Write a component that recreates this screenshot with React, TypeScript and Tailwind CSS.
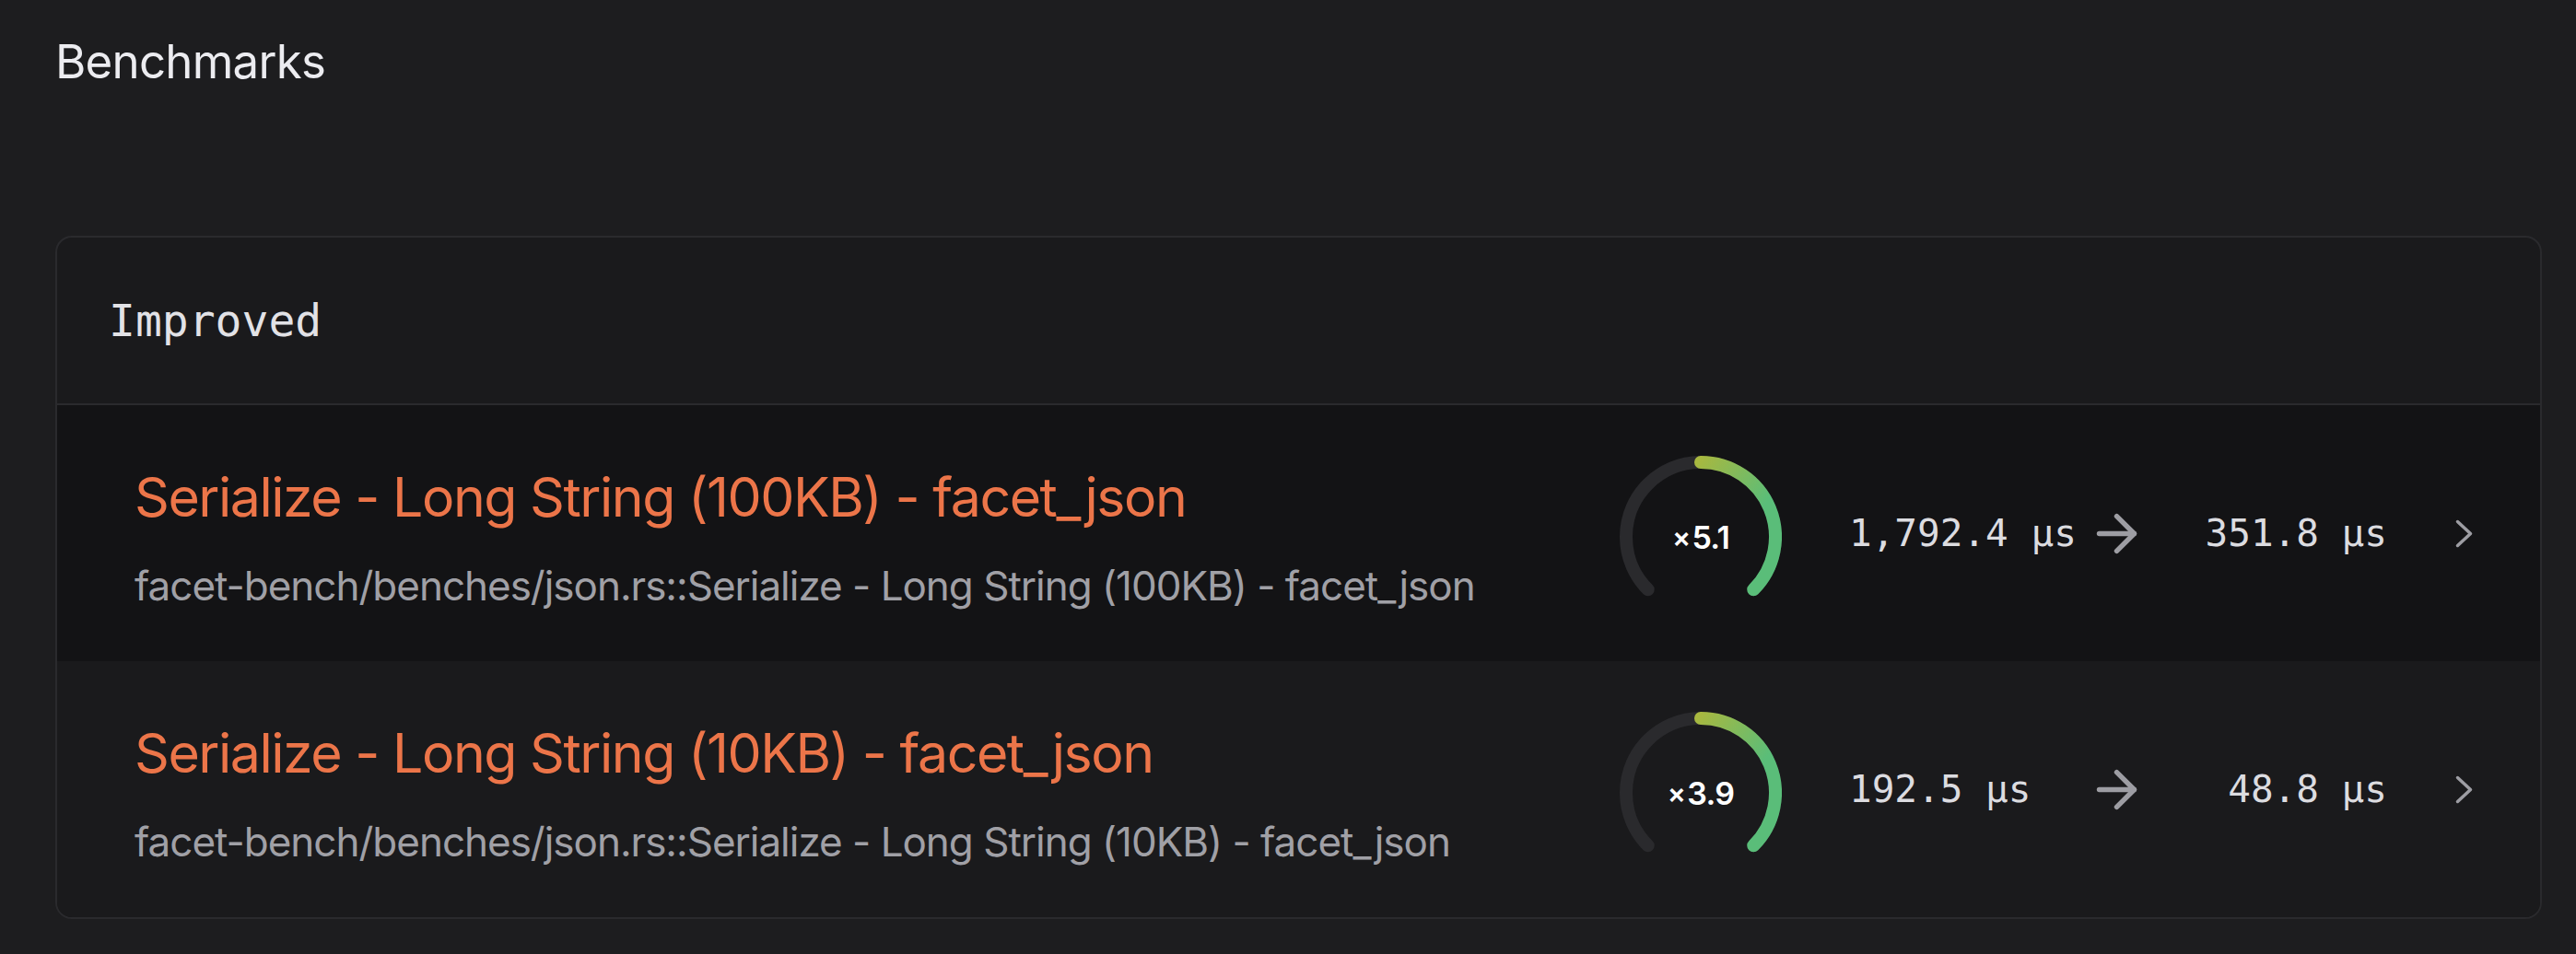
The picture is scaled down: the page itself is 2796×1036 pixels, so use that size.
import { ArrowRight } from "lucide-react";

type Bench = {
  id: string;
  title: string;
  path: string;
  ratio: string;
  before: string;
  after: string;
  active?: boolean;
};

const benches: Bench[] = [
  {
    id: "100kb",
    title: "Serialize - Long String (100KB) - facet_json",
    path: "facet-bench/benches/json.rs::Serialize - Long String (100KB) - facet_json",
    ratio: "5.1",
    before: "1,792.4 µs",
    after: "351.8 µs",
    active: true,
  },
  {
    id: "10kb",
    title: "Serialize - Long String (10KB) - facet_json",
    path: "facet-bench/benches/json.rs::Serialize - Long String (10KB) - facet_json",
    ratio: "3.9",
    before: "192.5 µs",
    after: "48.8 µs",
  },
];

function Gauge({ id, ratio }: { id: string; ratio: string }) {
  return (
    <div className="relative h-[176px] w-[176px] shrink-0">
      <svg width="176" height="176" viewBox="0 0 176 176" fill="none">
        <defs>
          <linearGradient id={`g-${id}`} gradientUnits="userSpaceOnUse" x1="82" y1="7" x2="150" y2="62">
            <stop offset="0" stopColor="#a9b83f" />
            <stop offset="1" stopColor="#5abd79" />
          </linearGradient>
        </defs>
        <path
          d="M30.72 145.28 A81 81 0 1 1 145.28 145.28"
          stroke="#2a2a2d"
          strokeWidth="14"
          strokeLinecap="round"
        />
        <path
          d="M88 7 A81 81 0 0 1 145.28 145.28"
          stroke={`url(#g-${id})`}
          strokeWidth="14"
          strokeLinecap="round"
        />
      </svg>
      <div className="absolute inset-0 flex items-center justify-center font-['Inter',sans-serif] text-[34px] font-semibold tracking-[-0.02em] text-white">
        <span className="mr-[2px] text-[30px]">×</span>
        {ratio}
      </div>
    </div>
  );
}

function Row({ bench }: { bench: Bench }) {
  return (
    <div
      className={`flex h-[278px] items-center pl-[84px] pr-[73px] ${
        bench.active ? "bg-[#131315]" : "bg-[#1a1a1c]"
      }`}
    >
      <div className="mt-[10px] flex flex-1 flex-col gap-[45px] font-['Inter',sans-serif]">
        <div className="text-[59px] leading-none tracking-[-0.025em] text-[#ec7549]">{bench.title}</div>
        <div className="text-[44px] leading-none tracking-[-0.023em] text-[#a0a0a6]">{bench.path}</div>
      </div>
      <div className="flex items-center">
        <div className="mt-2">
          <Gauge id={bench.id} ratio={bench.ratio} />
        </div>
        <div className="ml-[73px] w-[258px] font-['DejaVu_Sans_Mono',monospace] text-[41px] leading-none text-[#dcdce0]">
          {bench.before}
        </div>
        <ArrowRight size={65} strokeWidth={2} color="#9d9da3" />
        <div className="w-[261px] text-right font-['DejaVu_Sans_Mono',monospace] text-[41px] leading-none text-[#dcdce0]">
          {bench.after}
        </div>
        <svg className="ml-[74px]" width="19" height="31" viewBox="0 0 19 31" fill="none">
          <path
            d="M2.5 2.5 L16.5 15.5 L2.5 28.5"
            stroke="#9d9da3"
            strokeWidth="3.5"
            strokeLinecap="round"
            strokeLinejoin="round"
          />
        </svg>
      </div>
    </div>
  );
}

export default function App() {
  return (
    <div className="min-h-screen w-full bg-[#1d1d1f] pt-[41px]">
      <h1 className="pl-[60px] font-['Inter',sans-serif] text-[51px] leading-none font-normal tracking-[-0.015em] text-[#ececf0]">
        Benchmarks
      </h1>
      <section className="mt-[164px] ml-[60px] w-[2699px] overflow-hidden rounded-[18px] border-2 border-[#2a2a2d] bg-[#1a1a1c]">
        <div className="flex h-[182px] items-center border-b-2 border-[#2a2a2d] pl-[56px]">
          <h2 className="font-['DejaVu_Sans_Mono',monospace] text-[48px] leading-none text-[#e2e2e6]">Improved</h2>
        </div>
        {benches.map((bench) => (
          <Row key={bench.id} bench={bench} />
        ))}
      </section>
    </div>
  );
}
